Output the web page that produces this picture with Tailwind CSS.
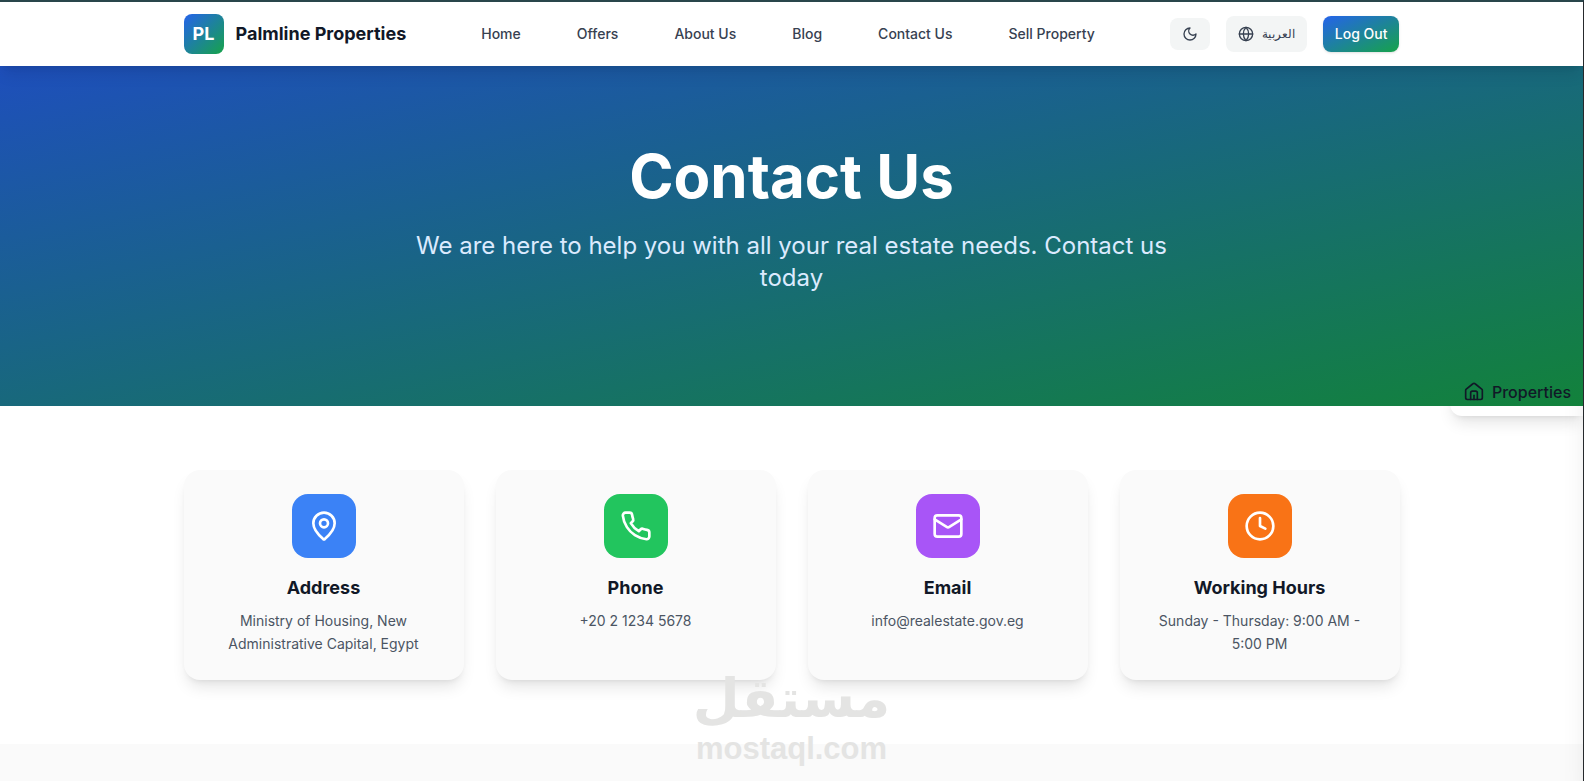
<!doctype html>
<html lang="en">
<head>
  <meta charset="UTF-8">
  <meta name="viewport" content="width=device-width, initial-scale=1.0">
  <title>Contact Us - Palmline Properties</title>
  <script src="https://cdn.jsdelivr.net/npm/@tailwindcss/browser@4"></script>
</head>
<body class="font-[Inter,sans-serif] bg-white text-[#111827]">
<div class="relative flex flex-col min-h-screen overflow-hidden border-t-2 border-r border-t-[#29464b] border-r-[#26292c]">

  <!-- navbar -->
  <header class="relative z-20 bg-white shadow-lg">
    <div class="max-w-7xl mx-auto px-8 h-16 flex items-center justify-between">
      <a href="#" class="flex items-center gap-3">
        <span class="size-10 rounded-lg bg-linear-to-br/srgb from-[#2563eb] to-[#16a34a] flex items-center justify-center text-white text-lg font-bold">PL</span>
        <span class="text-lg font-bold">Palmline Properties</span>
      </a>
      <nav class="flex items-center gap-8 text-sm font-medium text-[#374151]">
        <a href="#" class="px-3 py-2">Home</a>
        <a href="#" class="px-3 py-2">Offers</a>
        <a href="#" class="px-3 py-2">About Us</a>
        <a href="#" class="px-3 py-2">Blog</a>
        <a href="#" class="px-3 py-2">Contact Us</a>
        <a href="#" class="px-3 py-2">Sell Property</a>
      </nav>
      <div class="flex items-center gap-4 text-sm font-medium">
        <button type="button" aria-label="Dark mode" class="px-3 py-2 rounded-lg bg-[#f3f5f5] text-[#374151]">
          <svg class="size-4" viewBox="0 0 24 24" fill="none" stroke="currentColor" stroke-width="2" stroke-linecap="round" stroke-linejoin="round"><path d="M12 3a6 6 0 0 0 9 9 9 9 0 1 1-9-9Z"/></svg>
        </button>
        <button type="button" class="flex items-center gap-2 px-3 py-2 rounded-lg bg-[#f3f5f5] text-[#374151]">
          <svg class="size-4" viewBox="0 0 24 24" fill="none" stroke="currentColor" stroke-width="2" stroke-linecap="round" stroke-linejoin="round"><circle cx="12" cy="12" r="10"/><path d="M12 2a14.5 14.5 0 0 0 0 20 14.5 14.5 0 0 0 0-20"/><path d="M2 12h20"/></svg>
          <span lang="ar" class="text-xs leading-5 font-normal">العربية</span>
        </button>
        <button type="button" class="px-3 py-2 rounded-lg bg-linear-to-br/srgb from-[#2563eb] to-[#16a34a] text-white shadow-sm">Log Out</button>
      </div>
    </div>
  </header>

  <!-- hero -->
  <section class="relative z-10 bg-linear-to-br/srgb from-[#1e4fbc] to-[#12823b] text-white text-center">
    <div class="max-w-7xl mx-auto px-8 py-20">
      <h1 class="text-6xl font-bold mb-6">Contact Us</h1>
      <p class="text-2xl text-[#dbeafe] max-w-3xl mx-auto mb-8">We are here to help you with all your real estate needs. Contact us today</p>
    </div>
  </section>

  <!-- contact info -->
  <section class="bg-white py-16">
    <div class="max-w-7xl mx-auto px-8 grid grid-cols-4 gap-8 text-center">
      <div class="rounded-2xl bg-[#fafafa] p-6 shadow-lg">
        <div class="size-16 mx-auto mb-4 rounded-2xl bg-[#3b82f6] text-white flex items-center justify-center">
          <svg class="size-8" viewBox="0 0 24 24" fill="none" stroke="currentColor" stroke-width="2" stroke-linecap="round" stroke-linejoin="round"><path d="M20 10c0 4.993-5.539 10.193-7.399 11.799a1 1 0 0 1-1.202 0C9.539 20.193 4 14.993 4 10a8 8 0 0 1 16 0"/><circle cx="12" cy="10" r="3"/></svg>
        </div>
        <h3 class="text-lg font-bold mb-2">Address</h3>
        <p class="text-sm leading-relaxed text-[#4b5563]">Ministry of Housing, New Administrative Capital, Egypt</p>
      </div>
      <div class="rounded-2xl bg-[#fafafa] p-6 shadow-lg">
        <div class="size-16 mx-auto mb-4 rounded-2xl bg-[#22c55e] text-white flex items-center justify-center">
          <svg class="size-8" viewBox="0 0 24 24" fill="none" stroke="currentColor" stroke-width="2" stroke-linecap="round" stroke-linejoin="round"><path d="M22 16.92v3a2 2 0 0 1-2.18 2 19.79 19.79 0 0 1-8.63-3.07 19.5 19.5 0 0 1-6-6 19.79 19.79 0 0 1-3.07-8.67A2 2 0 0 1 4.11 2h3a2 2 0 0 1 2 1.72 12.84 12.84 0 0 0 .7 2.81 2 2 0 0 1-.45 2.11L8.09 9.91a16 16 0 0 0 6 6l1.27-1.27a2 2 0 0 1 2.11-.45 12.84 12.84 0 0 0 2.81.7A2 2 0 0 1 22 16.92z"/></svg>
        </div>
        <h3 class="text-lg font-bold mb-2">Phone</h3>
        <p class="text-sm leading-relaxed text-[#4b5563]">+20 2 1234 5678</p>
      </div>
      <div class="rounded-2xl bg-[#fafafa] p-6 shadow-lg">
        <div class="size-16 mx-auto mb-4 rounded-2xl bg-[#a855f7] text-white flex items-center justify-center">
          <svg class="size-8" viewBox="0 0 24 24" fill="none" stroke="currentColor" stroke-width="2" stroke-linecap="round" stroke-linejoin="round"><rect x="2" y="4" width="20" height="16" rx="2"/><path d="m22 7-8.97 5.7a1.94 1.94 0 0 1-2.06 0L2 7"/></svg>
        </div>
        <h3 class="text-lg font-bold mb-2">Email</h3>
        <p class="text-sm leading-relaxed text-[#4b5563]">info@realestate.gov.eg</p>
      </div>
      <div class="rounded-2xl bg-[#fafafa] p-6 shadow-lg">
        <div class="size-16 mx-auto mb-4 rounded-2xl bg-[#f97316] text-white flex items-center justify-center">
          <svg class="size-8" viewBox="0 0 24 24" fill="none" stroke="currentColor" stroke-width="2" stroke-linecap="round" stroke-linejoin="round"><circle cx="12" cy="12" r="10"/><path d="M12 6v6l4 2"/></svg>
        </div>
        <h3 class="text-lg font-bold mb-2">Working Hours</h3>
        <p class="text-sm leading-relaxed text-[#4b5563]">Sunday - Thursday: 9:00 AM - 5:00 PM</p>
      </div>
    </div>
  </section>

  <section class="grow bg-[#fafafa]"></section>

  <!-- properties tab, its white back sits under the hero -->
  <div class="absolute z-0 top-[366px] right-0 w-[133px] h-12 rounded-l-xl bg-white shadow-lg"></div>
  <button type="button" class="absolute z-20 top-[366px] right-0 h-12 px-3 flex items-center gap-2 font-medium">
    <svg class="size-5" viewBox="0 0 24 24" fill="none" stroke="currentColor" stroke-width="2" stroke-linecap="round" stroke-linejoin="round"><path d="M16 21v-8a2 2 0 0 0-2-2h-4a2 2 0 0 0-2 2v8"/><path d="M12 16v5"/><path d="M2 10a2 2 0 0 1 .709-1.528l8-6.4a2 2 0 0 1 2.582 0l8 6.4A2 2 0 0 1 22 10v9a2 2 0 0 1-2 2H4a2 2 0 0 1-2-2z"/></svg>
    Properties
  </button>

  <!-- closed drawer -->
  <aside class="absolute z-0 inset-y-0 left-full w-64 bg-white shadow-xl"></aside>

  <!-- watermark -->
  <div class="absolute z-30 inset-x-0 top-[665px] flex flex-col items-center text-[#e4e4e3] font-bold pointer-events-none">
    <span lang="ar" class="font-['DejaVu_Sans'] text-[54px] leading-[64px]">مستقل</span>
    <span class="font-['Liberation_Sans'] text-[31px] leading-9">mostaql.com</span>
  </div>
</div>
</body>
</html>
